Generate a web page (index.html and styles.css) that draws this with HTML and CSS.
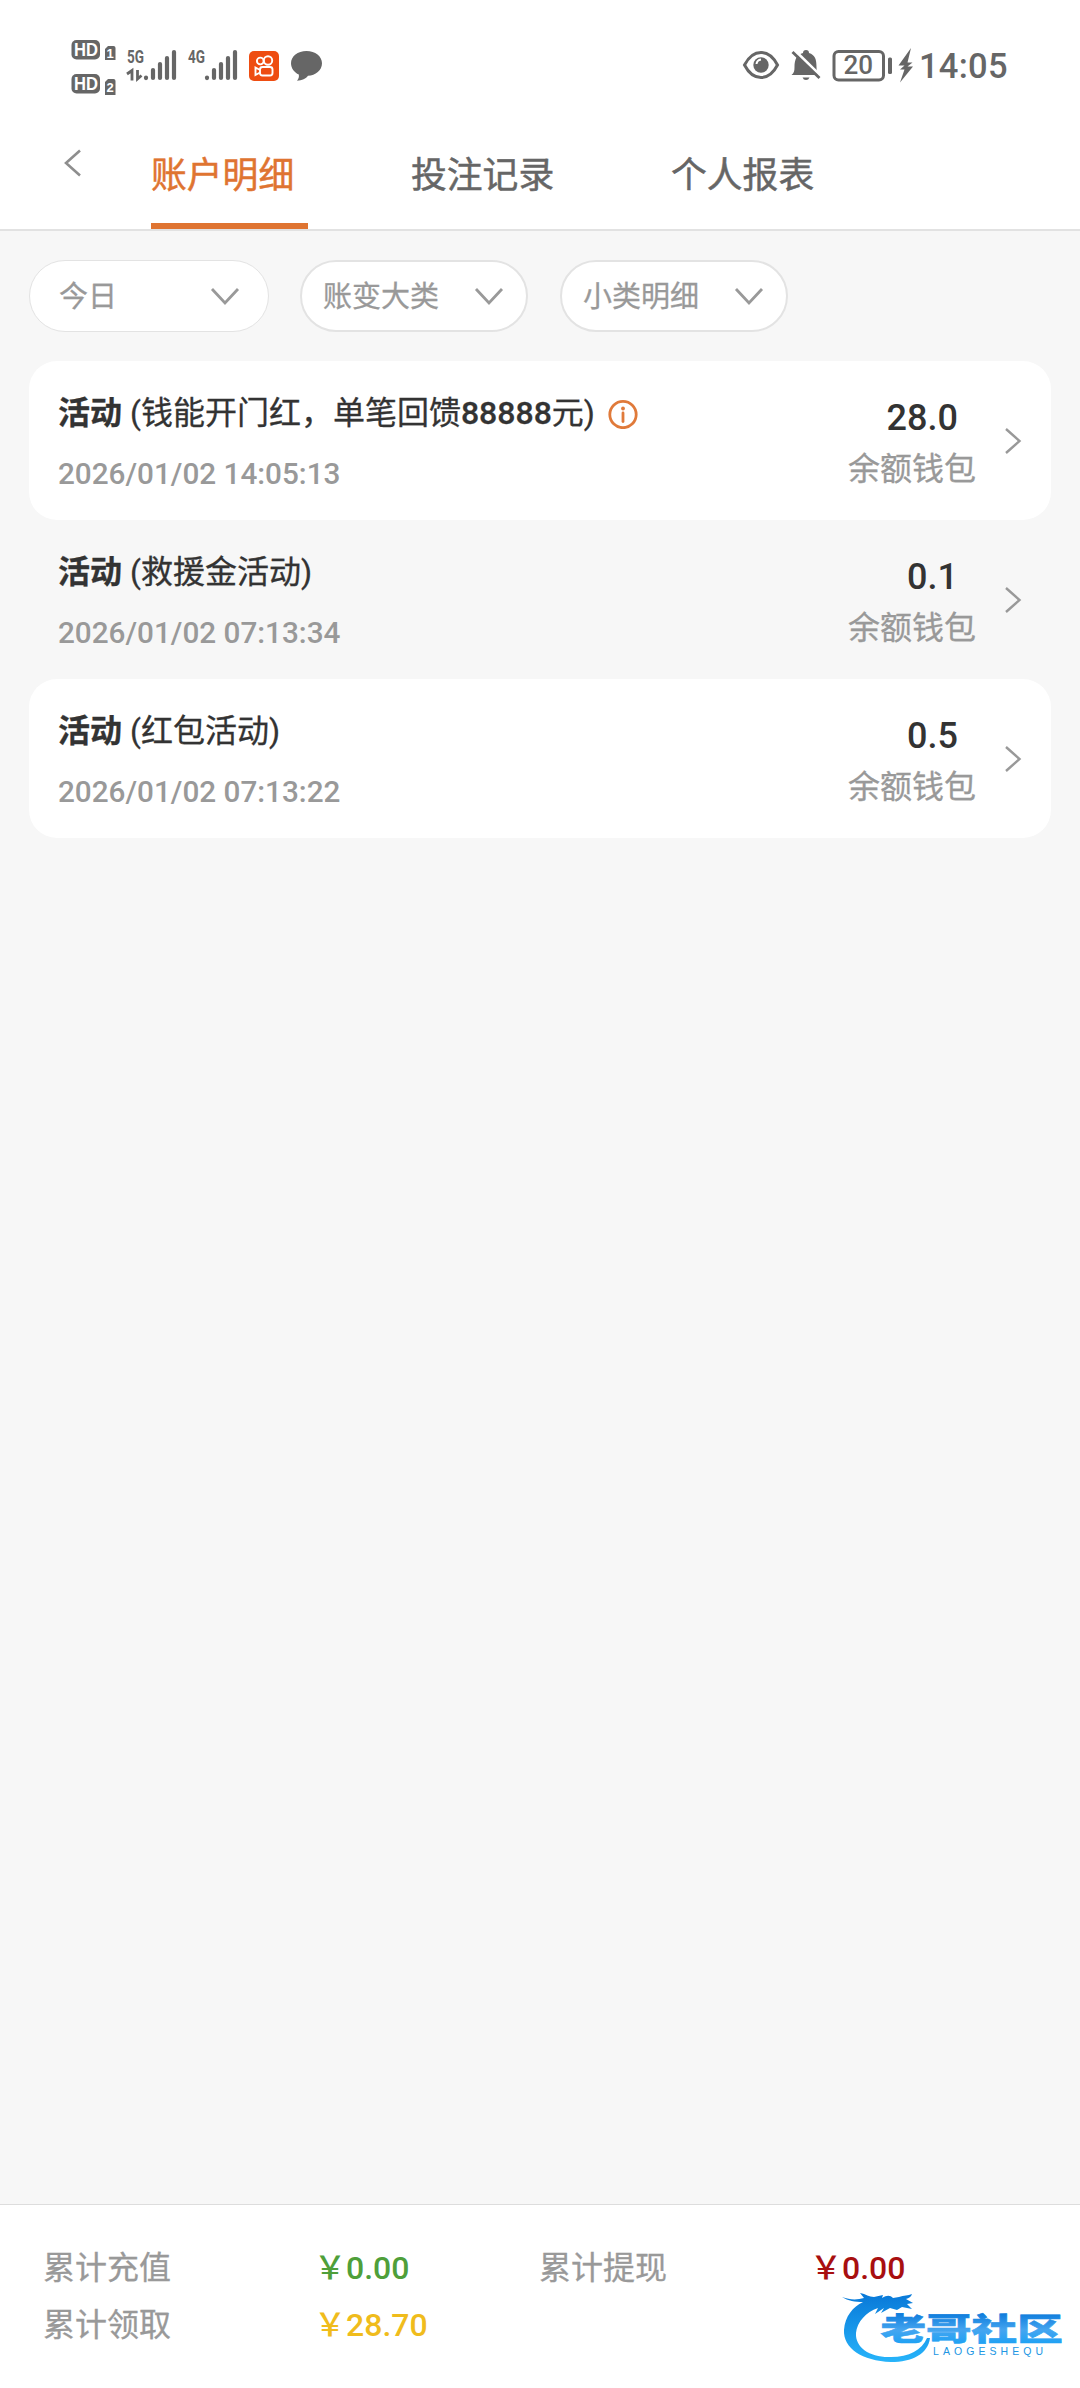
FILE: index.html
```html
<!DOCTYPE html>
<html lang="zh-CN">
<head>
<meta charset="utf-8">
<title>账户明细</title>
<link rel="stylesheet" href="styles.css">
</head>
<body>
<div class="screen">
  <header class="top">
    <div class="status">
      <svg class="status-left" width="264" height="60" viewBox="66 36 264 60">
        <g fill="#666">
          <rect x="71.500" y="40" width="28.500" height="19.500" rx="5"/>
          <rect x="71.500" y="74" width="28.500" height="19.500" rx="5"/>
          <path d="M105 49l3-3h5.500q2 0 2 2v12h-10.500z"/>
          <path d="M105 82l3-3h5.500q2 0 2 2v14h-10.500z"/>
        </g>
        <g class="hd" fill="#fff">
          <text x="74" y="56.300" font-size="18" textLength="24" lengthAdjust="spacingAndGlyphs">HD</text>
          <text x="74" y="90.300" font-size="18" textLength="24" lengthAdjust="spacingAndGlyphs">HD</text>
          <text x="106.500" y="58" font-size="13">1</text>
          <text x="106.500" y="92" font-size="13">2</text>
        </g>
        <g class="net" fill="#666">
          <text x="127" y="63" font-size="18.500" textLength="17" lengthAdjust="spacingAndGlyphs">5G</text>
          <text x="188" y="63" font-size="18.500" textLength="17" lengthAdjust="spacingAndGlyphs">4G</text>
        </g>
        <g fill="none" stroke="#666" stroke-width="2.800">
          <path d="M127 74l5-3.500v10M137.500 70v9l4-3.500"/>
        </g>
        <g stroke="#666" stroke-width="4.200" stroke-linecap="round">
          <path d="M146 77.500v.6M153 70v8M160 64v14M167 58v20M174 52v26"/>
          <path d="M207 77.500v.6M214 70v8M221 64v14M228 58v20M235 52v26"/>
        </g>
        <rect x="249" y="51" width="30" height="30" rx="5" fill="#ee4d12"/>
        <g fill="none" stroke="#fff" stroke-width="1.900">
          <circle cx="260.300" cy="61" r="3.400"/><circle cx="268" cy="60.500" r="4.200"/>
          <rect x="260" y="67" width="12.500" height="8.500" rx="2.500"/>
          <path d="M260 70l-4.500-2.500v7.500l4.500-2.500"/>
        </g>
        <path fill="#666" d="M306.500 51c8.800 0 15.500 5.300 15.500 12.200 0 7-6.500 12.300-14 12.600-2 2.800-6 4.900-11 5 1.700-1.800 2.200-3.800 1.800-6.200-4.600-2.300-7.800-6.500-7.800-11.400C291 56.300 297.700 51 306.500 51z"/>
      </svg>
      <svg class="status-right" width="284" height="60" viewBox="736 36 284 60">
        <path d="M744.500 65q6.500-12.500 16.500-12.500t16.500 12.500q-6.500 12.500-16.500 12.500t-16.500-12.500z" fill="none" stroke="#666" stroke-width="3"/>
        <circle cx="761" cy="65" r="7.700" fill="#666"/>
        <path d="M756.500 64q.5-4 4.500-4.500" fill="none" stroke="#fff" stroke-width="2"/>
        <path fill="#666" d="M791.500 75c2.500-2 3-4 3-8 0-8 2.500-12.500 8.500-14q0-3 3-3t3 3c6 2 7.500 6 7.500 14 0 4 .5 6 3 8z"/>
        <path d="M802.500 77.500h7q-1 2.500-3.500 2.500t-3.500-2.500z" fill="#666"/>
        <path d="M793.800 49.500l27.500 27" stroke="#fff" stroke-width="3"/>
        <path d="M792.500 52l27 26" stroke="#666" stroke-width="2.800"/>
        <rect x="834" y="51.500" width="49.500" height="28.500" rx="4.500" fill="none" stroke="#666" stroke-width="3"/>
        <rect x="888" y="57.500" width="4" height="16.500" rx="1.500" fill="#666"/>
        <text class="num" x="843.500" y="74" font-size="26" textLength="29.500" fill="#666">20</text>
        <path fill="#666" d="M911 48l-12.500 17.500h6l-4.500 4h4.500L900 82.500l13-16h-5.500l5-4h-5z"/>
        <text class="num" x="919" y="78" font-size="34.500" textLength="88.500" fill="#666">14:05</text>
      </svg>
    </div>
    <nav class="tabs">
      <svg class="back" width="20" height="30" viewBox="0 0 20 30"><path d="M18 2.500L4 15l14 12.500" fill="none" stroke="#8e8e8e" stroke-width="2.600"/></svg>
      <a class="tab active">账户明细</a>
      <a class="tab">投注记录</a>
      <a class="tab">个人报表</a>
    </nav>
  </header>

  <section class="filters">
    <div class="pill wide"><span>今日</span><svg width="30" height="20" viewBox="0 0 30 20"><path d="M2 2l13 14L28 2" fill="none" stroke="#999" stroke-width="2.800"/></svg></div>
    <div class="pill"><span>账变大类</span><svg width="30" height="20" viewBox="0 0 30 20"><path d="M2 2l13 14L28 2" fill="none" stroke="#999" stroke-width="2.800"/></svg></div>
    <div class="pill"><span>小类明细</span><svg width="30" height="20" viewBox="0 0 30 20"><path d="M2 2l13 14L28 2" fill="none" stroke="#999" stroke-width="2.800"/></svg></div>
  </section>

  <main class="list">
    <article class="row card">
      <div class="info">
        <div class="title"><span><b>活动</b> (钱能开门红，单笔回馈<em>88888</em>元)</span>
          <svg width="30" height="30" viewBox="0 0 30 30"><circle cx="15" cy="15.500" r="13.200" fill="none" stroke="#e07a3a" stroke-width="2.800"/><circle cx="15" cy="9.500" r="1.900" fill="#e07a3a"/><path d="M15 14v8.500" stroke="#e07a3a" stroke-width="2.800" stroke-linecap="round"/></svg>
        </div>
        <time>2026/01/02 14:05:13</time>
      </div>
      <div class="amount"><strong>28.0</strong><span>余额钱包</span></div>
      <svg class="go" width="18" height="28" viewBox="0 0 18 28"><path d="M2 2l13.500 12L2 26" fill="none" stroke="#999" stroke-width="2.400"/></svg>
    </article>
    <article class="row">
      <div class="info">
        <div class="title"><span><b>活动</b> (救援金活动)</span></div>
        <time>2026/01/02 07:13:34</time>
      </div>
      <div class="amount"><strong>0.1</strong><span>余额钱包</span></div>
      <svg class="go" width="18" height="28" viewBox="0 0 18 28"><path d="M2 2l13.500 12L2 26" fill="none" stroke="#999" stroke-width="2.400"/></svg>
    </article>
    <article class="row card">
      <div class="info">
        <div class="title"><span><b>活动</b> (红包活动)</span></div>
        <time>2026/01/02 07:13:22</time>
      </div>
      <div class="amount"><strong>0.5</strong><span>余额钱包</span></div>
      <svg class="go" width="18" height="28" viewBox="0 0 18 28"><path d="M2 2l13.500 12L2 26" fill="none" stroke="#999" stroke-width="2.400"/></svg>
    </article>
  </main>

  <footer class="totals">
    <span>累计充值</span><b class="green">￥0.00</b><span>累计提现</span><b class="red">￥0.00</b>
    <span>累计领取</span><b class="gold">￥28.70</b>
    <svg class="brand" width="240" height="84" viewBox="830 2284 240 84">
      <defs>
        <linearGradient id="sky" x1="0" y1="0" x2="0" y2="1"><stop offset="0" stop-color="#0878d8"/><stop offset="1" stop-color="#27b4fa"/></linearGradient>
        <linearGradient id="word" gradientUnits="userSpaceOnUse" x1="0" y1="-27" x2="0" y2="4"><stop offset="0" stop-color="#0d7bdb"/><stop offset=".55" stop-color="#45a5f0"/><stop offset="1" stop-color="#1da1f4"/></linearGradient>
      </defs>
      <path fill="url(#sky)" d="M842 2297c8 3 15 3 22 1l-4-5c6 1 9 4 14 4l9-2-1 3c5-3 8-3 11 0l6-1c5-2 9-1 13-3-1 3-3 4-6 5l7 4-6 1 5 5-10-2-5 3-7-2-9 5 3-5-9 6 3-6c-12 4-21 14-22 25-1 15 15 25 35 24 18 0 31-7 36-19h3c-2 16-18 24-39 24-29-1-48-14-47-32 1-14 9-23 19-28-8 0-15-1-21-5z"/>
      <g transform="translate(880.500 2340) scale(1.470 1)"><text class="brand-word" x="0" y="0" font-size="31" textLength="124" fill="url(#word)" stroke="url(#word)" stroke-width=".6">老哥社区</text></g>
      <text class="brand-sub" x="933" y="2355" font-size="10.500" textLength="110" fill="#2196e3">LAOGESHEQU</text>
    </svg>
  </footer>
</div>
</body>
</html>
```
FILE: styles.css
```css
* { box-sizing: border-box; }

body {
  margin: 0;
  background: #f7f7f7;
  color: #333;
  font-family: Roboto, "Noto Sans CJK SC", sans-serif;
}

svg { display: block; flex: none; }

.screen {
  width: 1080px;
  height: 2388px;
  display: flex;
  flex-direction: column;
}

/* header */
.top {
  height: 231px;
  background: #fff;
  border-bottom: 2px solid #e2e2e2;
}

.status {
  height: 130px;
  padding: 36px 60px 0 66px;
  display: flex;
  justify-content: space-between;
}

.hd text { font-family: "Liberation Sans", sans-serif; font-weight: 700; }
.net text { font-family: Roboto, sans-serif; font-weight: 700; }
.num { font-family: Roboto, sans-serif; font-weight: 500; }

.tabs {
  height: 99px;
  padding-left: 62px;
  display: flex;
}

.back { margin: 18px 69px 0 0; }

.tab {
  width: 157px;
  height: 99px;
  margin-right: 103px;
  border-bottom: 6px solid transparent;
  font-size: 35.800px;
  line-height: 93px;
  color: #666;
  white-space: nowrap;
  -webkit-text-stroke: .5px currentColor;
}

.tab.active { color: #df7431; border-color: #df7431; }

/* filters */
.filters {
  padding: 29px 29px 0;
  display: flex;
  gap: 31px;
}

.pill {
  width: 228px;
  height: 72px;
  padding: 0 22px 0 21px;
  display: flex;
  align-items: center;
  justify-content: space-between;
  border: 2px solid #e3e3e3;
  border-radius: 36px;
  background: #fff;
  color: #999;
  font-size: 29px;
  line-height: 72px;
  -webkit-text-stroke: .3px currentColor;
}

.pill + .pill + .pill { margin-left: 1px; }
.pill span { padding-top: 2px; }
.pill svg { margin-top: 2px; }

.pill.wide { width: 240px; padding: 0 28px 0 29px; border-width: 1px; }

/* records */
.list {
  flex: 1;
  padding: 29px 29px 0;
}

.row {
  height: 159px;
  padding: 0 29px 0 29px;
  display: flex;
  border-radius: 28px;
}

.row.card { background: #fff; }

.info { flex: 1; padding-top: 28px; }

.title {
  height: 48px;
  display: flex;
  align-items: center;
  gap: 13px;
  font-size: 32px;
  line-height: 48px;
  -webkit-text-stroke: .3px currentColor;
}

.title svg { margin-top: 1px; }
.title b { font-weight: 700; }
.title em { font-style: normal; font-weight: 500; }

time {
  display: block;
  margin-top: 19px;
  font-size: 29.700px;
  font-weight: 500;
  line-height: 36px;
  color: #999;
}

.amount {
  padding-top: 37px;
  margin-right: 28px;
  display: flex;
  flex-direction: column;
  align-items: flex-end;
  color: #999;
  font-size: 32px;
}

.amount strong {
  margin-right: 18px;
  font-size: 36px;
  font-weight: 500;
  line-height: 40px;
  color: #333;
}

.amount span { line-height: 62px; -webkit-text-stroke: .3px currentColor; }

.go { margin-top: 66px; }

/* totals */
.totals {
  height: 184px;
  padding: 35px 0 0 43px;
  display: grid;
  grid-template-columns: 271px 225px 271px 1fr;
  grid-template-rows: 57px 57px;
  position: relative;
  border-top: 1px solid #ddd;
  background: #fff;
  color: #999;
  font-size: 32px;
  line-height: 57px;
}

.totals span { -webkit-text-stroke: .3px currentColor; }
.totals b { font-weight: 500; }
.green { color: #4f9f3a; }
.red { color: #a80f10; }
.gold { color: #f0bc1c; }

/* community mark lying over the totals bar */
.brand {
  position: absolute;
  right: 10px;
  bottom: 20px;
}

.brand-word { font-family: "Noto Sans CJK SC", sans-serif; font-weight: 900; }
.brand-sub { font-family: "Liberation Sans", sans-serif; }
```
